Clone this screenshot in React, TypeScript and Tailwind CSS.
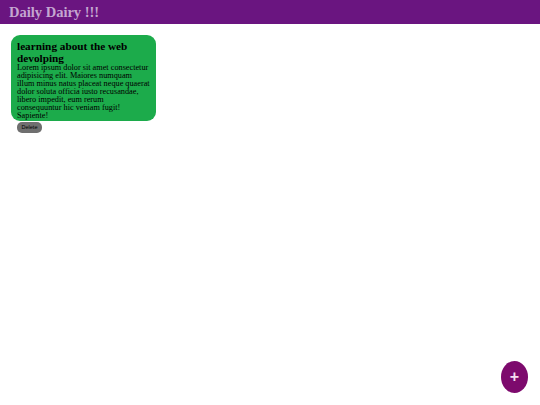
export default function App() {
  return (
    <div className="relative h-[405px] w-[540px] overflow-hidden bg-white font-['Liberation_Serif',serif]">
      <header className="flex h-6 items-center bg-[#6a1580] pl-[9px]">
        <h1 className="text-[14.5px] font-bold leading-none text-[#c4a6d0]">Daily Dairy !!!</h1>
      </header>
      <main className="pl-[11px] pt-[11px]">
        <div className="h-[86px] w-[145px] rounded-[9px] bg-[#1cab4b] px-[6px] pt-[6px] text-black">
          <h2 className="text-[11.25px] font-bold leading-[11.5px]">learning about the web devolping</h2>
          <p className="text-[8.25px] leading-[8px]">
            Lorem ipsum dolor sit amet consectetur adipisicing elit. Maiores numquam illum minus natus placeat neque quaerat dolor soluta officia iusto recusandae, libero impedit, eum rerum consequuntur hic veniam fugit! Sapiente!
          </p>
          <button className="mt-[2px] flex h-[11px] w-[25px] items-center justify-center rounded-[5px] bg-[#6f6f6f] font-['Liberation_Sans',sans-serif] text-[5.5px] leading-none text-black">
            Delete
          </button>
        </div>
      </main>
      <button className="absolute left-[501px] top-[361px] flex h-[32px] w-[27px] items-center justify-center rounded-[50%] bg-[#7d0a6d] font-['Liberation_Sans',sans-serif] text-[16px] font-bold leading-none text-[#f3dff0]">
        +
      </button>
    </div>
  );
}
